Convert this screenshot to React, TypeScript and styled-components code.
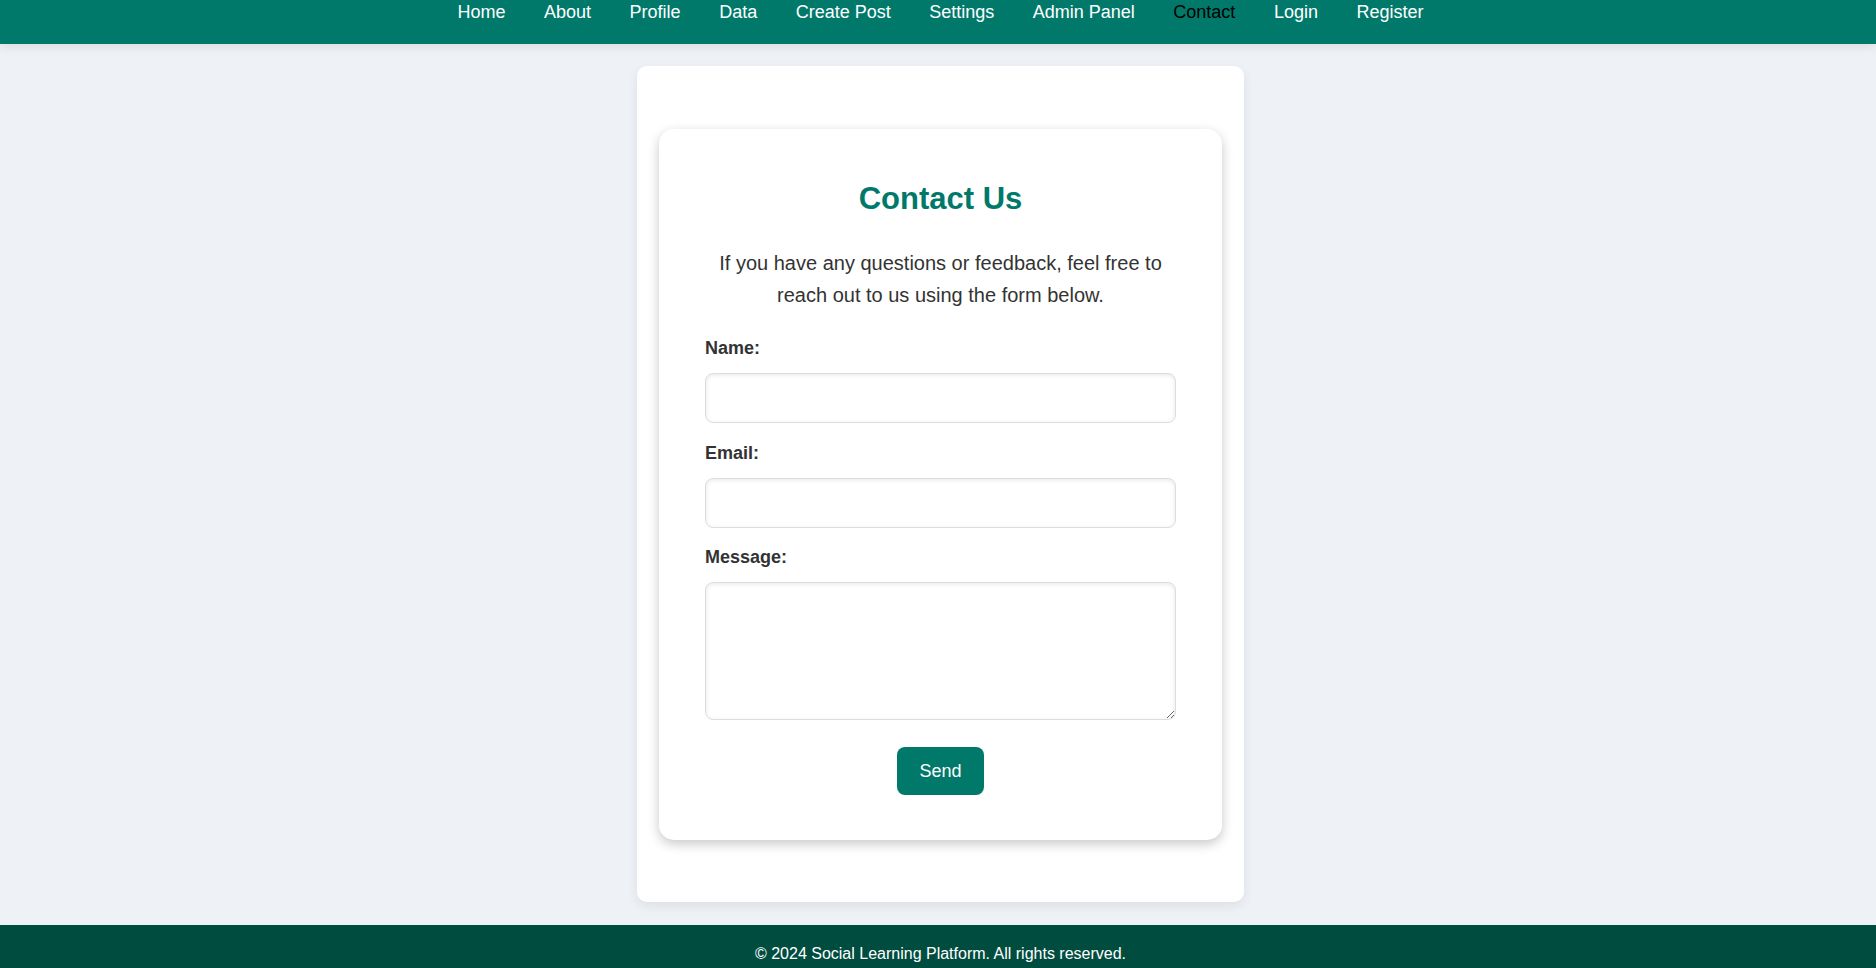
import React from 'react'
import { styled, createGlobalStyle } from 'styled-components'

const GlobalStyle = createGlobalStyle`
  body {
    margin: 0;
    background-color: #eef2f7;
    font-family: 'Liberation Sans', Arial, sans-serif;
    color: #333;
  }
`

const links = ['Home', 'About', 'Profile', 'Data', 'Create Post', 'Settings', 'Admin Panel', 'Contact', 'Login', 'Register']

export default function App() {
  return (
    <>
      <GlobalStyle />
      <Nav>
        {links.map((l) => (
          <NavLink key={l} href='#' $active={l === 'Contact'}>
            {l}
          </NavLink>
        ))}
      </Nav>
      <Main>
        <Container>
          <Card>
            <Title>Contact Us</Title>
            <Intro>If you have any questions or feedback, feel free to reach out to us using the form below.</Intro>
            <form onSubmit={(e) => e.preventDefault()}>
              <Label htmlFor='name'>Name:</Label>
              <Input id='name' type='text' />
              <Label htmlFor='email'>Email:</Label>
              <Input id='email' type='email' />
              <Label htmlFor='message'>Message:</Label>
              <TextArea id='message' />
              <Actions>
                <SendBtn type='submit'>Send</SendBtn>
              </Actions>
            </form>
          </Card>
        </Container>
      </Main>
      <Footer>
        <p>© 2024 Social Learning Platform. All rights reserved.</p>
      </Footer>
    </>
  )
}

const Nav = styled.nav`
  height: 44px;
  box-sizing: border-box;
  padding: 2px 0 0 5px;
  background-color: #00796b;
  display: flex;
  justify-content: center;
  align-items: flex-start;
  gap: 38.5px;
  box-shadow: 0 2px 10px rgba(0, 0, 0, 0.1);
`

const NavLink = styled.a<{ $active?: boolean }>`
  color: ${(p) => (p.$active ? '#000' : '#fff')};
  text-decoration: none;
  font-size: 18px;
  line-height: 21px;
`

const Main = styled.main`
  display: flex;
  justify-content: center;
  padding: 22px 0 23px 5px;
`

const Container = styled.div`
  width: 607px;
  box-sizing: border-box;
  padding: 63px 22px 62px;
  background-color: #fff;
  border-radius: 10px;
  box-shadow: 0 4px 12px rgba(0, 0, 0, 0.08);
`

const Card = styled.div`
  padding: 51px 46px 45px;
  background-color: #fff;
  border-radius: 15px;
  box-shadow: 0 4px 12px rgba(0, 0, 0, 0.22);
`

const Title = styled.h2`
  margin: 0 0 30px;
  text-align: center;
  color: #00796b;
  font-size: 31px;
  line-height: 37px;
  font-weight: bold;
`

const Intro = styled.p`
  margin: 0 0 27px;
  text-align: center;
  font-size: 20px;
  line-height: 32px;
  color: #333;
`

const Label = styled.label`
  display: block;
  margin-bottom: 14px;
  font-size: 18px;
  font-weight: bold;
  color: #333;
`

const Input = styled.input`
  display: block;
  width: 100%;
  height: 50px;
  box-sizing: border-box;
  margin: 0 0 19.5px;
  padding: 0 12px;
  border: 1px solid #ddd;
  border-radius: 8px;
  box-shadow: inset 0 1px 4px rgba(0, 0, 0, 0.1);
  font-family: inherit;
  font-size: 16px;
  &:focus {
    outline: none;
    border-color: #00796b;
  }
`

const TextArea = styled.textarea`
  display: block;
  width: 100%;
  height: 138px;
  box-sizing: border-box;
  margin: 0 0 27px;
  padding: 12px;
  border: 1px solid #ddd;
  border-radius: 8px;
  box-shadow: inset 0 1px 4px rgba(0, 0, 0, 0.1);
  font-family: inherit;
  font-size: 16px;
  &:focus {
    outline: none;
    border-color: #00796b;
  }
`

const Actions = styled.div`
  display: flex;
  justify-content: center;
`

const SendBtn = styled.button`
  height: 48px;
  padding: 0 22px;
  border: none;
  border-radius: 8px;
  background-color: #00796b;
  color: #fff;
  font-family: inherit;
  font-size: 18px;
  cursor: pointer;

  &:hover {
    background-color: #00695c;
  }
`

const Footer = styled.footer`
  background-color: #004d40;
  color: #fff;
  text-align: center;
  padding: 20px 0 20px 5px;

  & p {
    margin: 0;
    font-size: 16px;
  }
`
